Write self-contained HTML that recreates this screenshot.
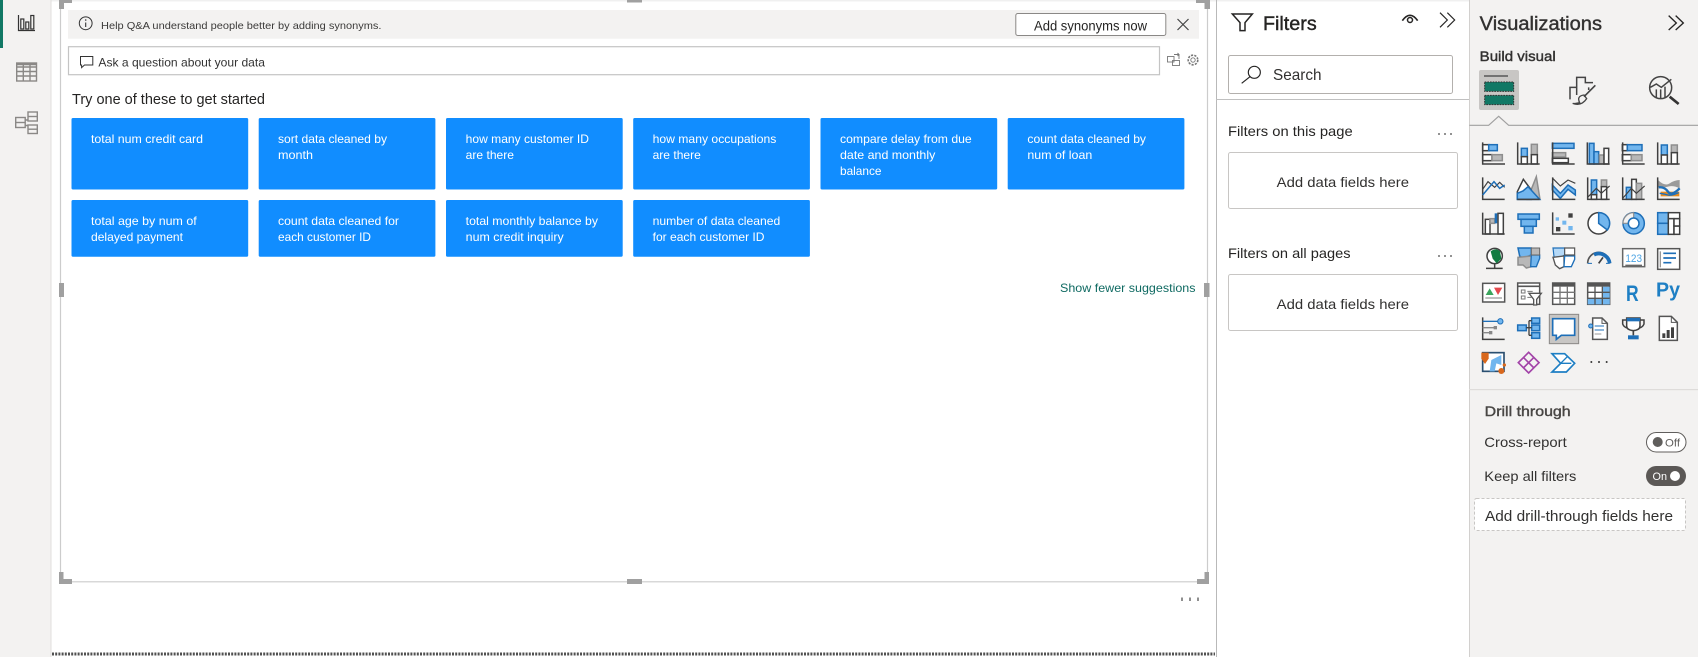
<!DOCTYPE html>
<html lang="en"><head><meta charset="utf-8"><title>Q&amp;A</title>
<style>
html,body{margin:0;padding:0;background:#fff;width:1698px;height:657px;overflow:hidden}
svg{display:block;font-family:"Liberation Sans",sans-serif}
text{fill:#252423}
.c text{fill:#fff;font-size:12px}
.d{fill:none;stroke:#404040;stroke-width:4.5}
.bl{fill:#72b6ee;stroke:#1e6fb8;stroke-width:4.5}
.bb{fill:#1e6fb8;stroke:none}
.gr{fill:#b8b8b8;stroke:#8e8e8e;stroke-width:4.5}
.wh{fill:#fff;stroke:#404040;stroke-width:4.5}
.card{fill:#118dff}
.sb{stroke:#323130;stroke-width:.4}
</style></head><body>
<svg width="1698" height="657" viewBox="0 0 1698 657" xmlns="http://www.w3.org/2000/svg">
<rect width="1698" height="657" fill="#fff"/>
<rect y="0" width="1698" height="1.5" fill="#f0f0f0"/>
<!-- left rail -->
<rect width="51" height="657" fill="#f3f2f1"/>
<rect x="50.5" width="1" height="657" fill="#e1dfdd"/>
<rect width="3" height="48" fill="#117865"/>
<g fill="none" stroke="#333" stroke-width="1.2">
<path d="M18.5 15V30.5H35"/><rect x="20.8" y="19" width="3" height="10"/><rect x="25.8" y="22" width="3" height="7"/><rect x="30.8" y="15.5" width="3" height="13.5"/>
</g>
<g fill="none" stroke="#8a8886" stroke-width="1.4">
<rect x="16.7" y="63" width="19.8" height="18"/><path d="M16.7 67H36.5M16.7 71.5H36.5M16.7 76H36.5M23.3 65V81M30 65V81"/>
<path stroke-width="2.4" d="M16.7 64H36.5"/>
<rect x="15.7" y="117.5" width="9.5" height="10"/><path d="M15.7 122.5H25.2"/>
<rect x="28" y="112" width="9.3" height="9"/><path d="M28 116.5H37.3"/>
<rect x="28" y="125" width="9.3" height="8.5"/><path d="M28 129.2H37.3"/>
<path d="M25.2 120H28M25.2 125.5H28"/>
</g>
<!-- right of canvas panel edge -->
<rect x="1216" width="1" height="657" fill="#b9b9b9"/>
<!-- dotted page edge -->
<path d="M52 654H1215" stroke="#505050" stroke-width="3" stroke-dasharray="2 1.2" fill="none"/>
<!-- frame -->
<g fill="none" stroke="#cccccc" stroke-width="1.2">
<path d="M60.5 0V581.8H1207.5V0"/>
</g>
<g fill="#a0a0a0">
<rect x="59" y="0" width="13" height="3"/><rect x="59" y="0" width="5" height="9"/>
<rect x="627" y="0" width="15" height="2.5"/>
<rect x="1196" y="0" width="14" height="3"/><rect x="1204.5" y="0" width="5.5" height="9"/>
<rect x="59" y="283" width="5" height="14"/><rect x="1204" y="283" width="5.5" height="14"/>
<rect x="59" y="572" width="4.5" height="12"/><rect x="59" y="579" width="13" height="5"/>
<rect x="627" y="579" width="15" height="5"/>
<rect x="1204.5" y="572" width="4.5" height="12"/><rect x="1197" y="579" width="12" height="5"/>
</g>
<g fill="#8f8f8f"><rect x="1181" y="597.5" width="2" height="3.5"/><rect x="1189" y="597.5" width="2" height="3.5"/><rect x="1197" y="597.5" width="2" height="3.5"/></g>
<!-- banner -->
<rect x="68" y="10" width="1131" height="28.7" fill="#f3f2f1"/>
<circle cx="85.7" cy="23.3" r="6.4" fill="none" stroke="#333" stroke-width="1"/>
<path d="M85.7 22.5V27" stroke="#333" stroke-width="1.1"/><circle cx="85.7" cy="20" r=".8" fill="#333"/>
<text x="101" y="29" font-size="10.5" textLength="280.5" lengthAdjust="spacingAndGlyphs" style="fill:#3b3a39">Help Q&amp;A understand people better by adding synonyms.</text>
<rect x="1015.8" y="13.5" width="150" height="22" rx="2" fill="#fff" stroke="#8a8886"/>
<text x="1034" y="30.3" font-size="13.5" textLength="113" lengthAdjust="spacingAndGlyphs">Add synonyms now</text>
<path d="M1177.5 19L1188.5 30M1188.5 19L1177.5 30" stroke="#444" stroke-width="1.2" fill="none"/>
<!-- ask box -->
<rect x="68.5" y="46.7" width="1091" height="28" fill="#fff" stroke="#c4c4c4" stroke-width="1.2"/>
<path d="M80.5 56.5H92.8V65H84.5L81.6 67.6V65H80.5Z" fill="none" stroke="#333" stroke-width="1"/>
<text x="98.4" y="66.3" font-size="12" textLength="166.6" lengthAdjust="spacingAndGlyphs" style="fill:#333">Ask a question about your data</text>
<g fill="none" stroke="#777" stroke-width=".9">
<rect x="1167.5" y="56.5" width="6.5" height="5.5"/><rect x="1172.5" y="60.5" width="7" height="5"/><path d="M1174 54.5H1179V59M1177.5 53L1179 54.5L1177.5 56"/>
<circle cx="1193" cy="60" r="2.2"/><circle cx="1193" cy="60" r="4.8" stroke-dasharray="2.2 1.2" stroke-width="1.6"/>
</g>
<text x="72" y="104" font-size="14.5" textLength="193" lengthAdjust="spacingAndGlyphs">Try one of these to get started</text>
<!-- cards -->
<g class="c">
<rect class="card" x="71.5" y="118" width="176.7" height="71.5" rx="1.5"/>
<rect class="card" x="258.7" y="118" width="176.7" height="71.5" rx="1.5"/>
<rect class="card" x="446" y="118" width="176.7" height="71.5" rx="1.5"/>
<rect class="card" x="633.2" y="118" width="176.7" height="71.5" rx="1.5"/>
<rect class="card" x="820.5" y="118" width="176.7" height="71.5" rx="1.5"/>
<rect class="card" x="1007.7" y="118" width="176.7" height="71.5" rx="1.5"/>
<rect class="card" x="71.5" y="200" width="176.7" height="56.7" rx="1.5"/>
<rect class="card" x="258.7" y="200" width="176.7" height="56.7" rx="1.5"/>
<rect class="card" x="446" y="200" width="176.7" height="56.7" rx="1.5"/>
<rect class="card" x="633.2" y="200" width="176.7" height="56.7" rx="1.5"/>
<text x="91" y="143" textLength="112" lengthAdjust="spacingAndGlyphs">total num credit card</text>
<text x="278" y="143" textLength="109" lengthAdjust="spacingAndGlyphs">sort data cleaned by</text>
<text x="278" y="159" textLength="35" lengthAdjust="spacingAndGlyphs">month</text>
<text x="465.7" y="143" textLength="123.3" lengthAdjust="spacingAndGlyphs">how many customer ID</text>
<text x="465.7" y="159" textLength="48.3" lengthAdjust="spacingAndGlyphs">are there</text>
<text x="652.6" y="143" textLength="123.8" lengthAdjust="spacingAndGlyphs">how many occupations</text>
<text x="652.6" y="159" textLength="48.2" lengthAdjust="spacingAndGlyphs">are there</text>
<text x="840" y="143" textLength="131.7" lengthAdjust="spacingAndGlyphs">compare delay from due</text>
<text x="840" y="159" textLength="95.3" lengthAdjust="spacingAndGlyphs">date and monthly</text>
<text x="840" y="175" textLength="41.5" lengthAdjust="spacingAndGlyphs">balance</text>
<text x="1027.4" y="143" textLength="118.6" lengthAdjust="spacingAndGlyphs">count data cleaned by</text>
<text x="1027.4" y="159" textLength="64.9" lengthAdjust="spacingAndGlyphs">num of loan</text>
<text x="91" y="225" textLength="105.7" lengthAdjust="spacingAndGlyphs">total age by num of</text>
<text x="91" y="241" textLength="92" lengthAdjust="spacingAndGlyphs">delayed payment</text>
<text x="278" y="225" textLength="121" lengthAdjust="spacingAndGlyphs">count data cleaned for</text>
<text x="278" y="241" textLength="93" lengthAdjust="spacingAndGlyphs">each customer ID</text>
<text x="465.7" y="225" textLength="132.3" lengthAdjust="spacingAndGlyphs">total monthly balance by</text>
<text x="465.7" y="241" textLength="98" lengthAdjust="spacingAndGlyphs">num credit inquiry</text>
<text x="652.6" y="225" textLength="127.7" lengthAdjust="spacingAndGlyphs">number of data cleaned</text>
<text x="652.6" y="241" textLength="111.9" lengthAdjust="spacingAndGlyphs">for each customer ID</text>
</g>
<text x="1060" y="292" font-size="12" textLength="135.5" lengthAdjust="spacingAndGlyphs" style="fill:#0f6a62">Show fewer suggestions</text>
<!-- filters pane -->
<text x="1263" y="30" font-size="19" class="sb" textLength="53.7" lengthAdjust="spacingAndGlyphs" style="stroke:#252423">Filters</text>
<rect x="1228.5" y="55.5" width="224" height="38" rx="2" fill="#fff" stroke="#b3b0ad"/>
<g transform="translate(1210 0) scale(.33333)" fill="none" stroke="#252423">
<path d="M67 42H127L105 68V92H90V68Z" stroke-width="4.5"/>
<path d="M577 62Q600 30 623 62" stroke-width="5"/><circle cx="600" cy="60" r="7.5" stroke-width="4.5"/>
<path d="M690 38L712 60L690 82M712 38L734 60L712 82" stroke-width="3.5"/>
<circle cx="133" cy="217" r="18" stroke-width="3.5"/><path d="M120 230L95 250" stroke-width="3.5"/>
</g>
<text x="1273" y="80" font-size="16" textLength="48.5" lengthAdjust="spacingAndGlyphs" style="fill:#323130">Search</text>
<rect x="1216" y="99" width="253" height="1" fill="#c0c0c0"/>
<text x="1228" y="136" font-size="14" textLength="124.7" lengthAdjust="spacingAndGlyphs">Filters on this page</text>
<text x="1228" y="258" font-size="14" textLength="122.5" lengthAdjust="spacingAndGlyphs">Filters on all pages</text>
<g fill="#444"><circle cx="1439" cy="134" r=".9"/><circle cx="1445" cy="134" r=".9"/><circle cx="1451" cy="134" r=".9"/><circle cx="1439" cy="256" r=".9"/><circle cx="1445" cy="256" r=".9"/><circle cx="1451" cy="256" r=".9"/></g>
<rect x="1228.5" y="152.5" width="229" height="56" rx="2" fill="#fff" stroke="#c8c6c4"/>
<rect x="1228.5" y="274.5" width="229" height="56" rx="2" fill="#fff" stroke="#c8c6c4"/>
<text x="1276.7" y="187" font-size="14" textLength="132.3" lengthAdjust="spacingAndGlyphs" style="fill:#323130">Add data fields here</text>
<text x="1276.7" y="309" font-size="14" textLength="132.3" lengthAdjust="spacingAndGlyphs" style="fill:#323130">Add data fields here</text>
<!-- viz pane -->
<rect x="1469" y="0" width="229" height="657" fill="#f3f2f1"/>
<rect x="1469" y="0" width="1" height="657" fill="#d2d0ce"/>
<text x="1479.7" y="30" font-size="19" class="sb" textLength="122.3" lengthAdjust="spacingAndGlyphs" style="fill:#323130">Visualizations</text>
<text x="1479.7" y="61" font-size="14" class="sb" textLength="76" lengthAdjust="spacingAndGlyphs" style="fill:#323130">Build visual</text>
<g transform="translate(1468 0) scale(.33333)">
<path d="M602 47L625 69L602 90M623 47L646 69L623 90" fill="none" stroke="#252423" stroke-width="4"/>
<rect x="33" y="210" width="120" height="120" rx="6" fill="#c8c6c4"/>
<path d="M48 228H120" stroke="#404040" stroke-width="4"/>
<rect x="50" y="246" width="87" height="28" fill="#117865" stroke="#333" stroke-width="3" stroke-dasharray="5 3"/>
<rect x="50" y="286" width="87" height="28" fill="#117865" stroke="#333" stroke-width="3" stroke-dasharray="5 3"/>
<g fill="none" stroke="#444" stroke-width="4.5">
<path d="M306 298V262H326V232H352V250M352 248H375M362 270V262M326 262V285"/>
<path d="M382 256L348 290" stroke-width="5"/><path d="M348 285Q325 288 335 308Q318 312 314 310Q340 320 356 296Z" stroke-width="4"/>
<circle cx="578" cy="263" r="33"/><path d="M547 262L565 252L580 262L610 238"/><path d="M565 268V294M578 268V296M591 260V294"/>
</g>
<path d="M605 290L632 312" stroke="#333" stroke-width="8"/>
<path d="M4 376H62L92 349L122 376H690" fill="none" stroke="#a0a0a0" stroke-width="3.5"/>
</g>
<!-- icon rows 1-3 -->
<g transform="translate(1468 130) scale(.33333)">
<!-- 1 -->
<rect class="wh" x="44" y="44" width="20" height="18"/><rect class="bl" x="62" y="44" width="26" height="18"/><rect class="wh" x="44" y="74" width="28" height="18"/><rect class="gr" x="72" y="74" width="31" height="18"/><path class="d" d="M44 37V102H111"/>
<!-- 2 -->
<rect class="bl" x="160" y="55" width="18" height="25"/><rect class="wh" x="160" y="80" width="18" height="22"/><rect class="gr" x="190" y="43" width="18" height="31"/><rect class="wh" x="190" y="74" width="18" height="28"/><path class="d" d="M149 37V102H215"/>
<!-- 3 -->
<rect class="bl" x="253" y="40" width="65" height="15"/><rect class="gr" x="253" y="68" width="40" height="13"/><rect class="wh" x="253" y="85" width="48" height="13"/><path class="d" d="M254 37V102H320"/>
<!-- 4 -->
<rect class="bl" x="364" y="40" width="14" height="62"/><rect class="bl" x="378" y="65" width="14" height="37"/><rect class="gr" x="394" y="75" width="14" height="27"/><rect class="wh" x="408" y="55" width="14" height="47"/><path class="d" d="M358 37V102H425"/>
<!-- 5 -->
<rect class="wh" x="463" y="44" width="15" height="18"/><rect class="bl" x="478" y="44" width="44" height="18"/><rect class="wh" x="463" y="74" width="27" height="18"/><rect class="gr" x="490" y="74" width="32" height="18"/><path class="d" d="M464 37V102H530"/>
<!-- 6 -->
<rect class="bl" x="580" y="45" width="18" height="30"/><rect class="wh" x="580" y="75" width="18" height="27"/><rect class="gr" x="610" y="45" width="18" height="23"/><rect class="wh" x="610" y="68" width="18" height="34"/><path class="d" d="M569 37V102H635"/>
<!-- 7 -->
<path class="d" d="M44 142V208H110"/><path class="d" d="M44 178L60 155L80 172L95 157L110 172" style="stroke-width:3.5"/><path d="M44 195L78 155L95 175L110 165" fill="none" stroke="#1e6fb8" stroke-width="4.5"/>
<!-- 8 -->
<path class="gr" d="M178 208L205 140L216 208Z"/><path class="wh" d="M148 208V185L166 148L190 180V208Z"/><path class="bl" d="M148 208V190L165 183L180 170L215 208Z"/><path class="d" d="M148 208H215"/>
<!-- 9 -->
<path class="bl" d="M253 165L277 190L300 165L322 180V195L300 178L277 205L253 180Z"/><path class="d" d="M254 142V208H322"/><path class="d" d="M254 145L277 168L300 150L322 160" style="stroke-width:3.5"/>
<!-- 10 -->
<rect class="bl" x="370" y="150" width="16" height="44"/><rect class="wh" x="370" y="194" width="16" height="14"/><rect class="gr" x="400" y="150" width="16" height="20"/><rect class="wh" x="400" y="170" width="16" height="38"/><path class="d" d="M359 142V208H425"/><path class="d" d="M359 202L385 175L400 190L425 168" style="stroke-width:3.5"/>
<!-- 11 -->
<rect class="bl" x="475" y="172" width="16" height="36"/><rect class="wh" x="491" y="148" width="14" height="60"/><rect class="gr" x="505" y="160" width="16" height="48"/><path class="d" d="M464 142V208H530"/><path class="d" d="M464 205L490 175L505 190L530 168" style="stroke-width:3.5"/>
<!-- 12 -->
<path fill="#9a9a9a" d="M570 150Q590 170 605 160T635 150V175Q615 165 600 170T570 170Z"/><rect x="578" y="185" width="56" height="14" fill="#e68a1f"/><path d="M572 172Q590 170 600 185T635 175" fill="none" stroke="#1e6fb8" stroke-width="7"/><path d="M575 190Q590 192 600 195T632 188" fill="none" stroke="#1e6fb8" stroke-width="4"/><path class="d" d="M569 142V208H635"/>
<!-- 13 -->
<rect class="wh" x="52" y="268" width="14" height="44"/><rect class="gr" x="66" y="266" width="14" height="14"/><rect class="bb" x="80" y="250" width="8" height="30"/><rect class="wh" x="90" y="250" width="16" height="62"/><path class="d" d="M44 248V312H110"/>
<!-- 14 -->
<rect class="bl" x="150" y="252" width="64" height="16"/><rect class="bl" x="159" y="268" width="46" height="21"/><rect class="bl" x="169" y="289" width="26" height="20"/>
<!-- 15 -->
<path class="d" d="M254 247V312H320"/><rect x="263" y="262" width="10" height="10" fill="#72b6ee"/><rect x="283" y="272" width="12" height="12" fill="#72b6ee"/><rect x="301" y="250" width="13" height="13" fill="#404040"/><rect x="264" y="291" width="13" height="13" fill="#404040"/><rect x="301" y="288" width="13" height="13" fill="#72b6ee"/>
<!-- 16 -->
<circle class="wh" cx="392" cy="280" r="32"/><path class="bl" d="M392 280V248A32 32 0 0 1 418 300Z"/>
<!-- 17 -->
<circle cx="497" cy="280" r="32" fill="#72b6ee" stroke="#1e6fb8" stroke-width="4.5"/><path d="M497 248A32 32 0 0 0 465 280H481A16 16 0 0 1 497 264Z" fill="#f3f2f1" stroke="#8e8e8e" stroke-width="3.5"/><circle cx="497" cy="280" r="16" fill="#fff" stroke="#1e6fb8" stroke-width="4.5"/>
<!-- 18 -->
<rect class="bl" x="569" y="248" width="32" height="32"/><rect class="bl" x="569" y="280" width="32" height="33"/><rect class="wh" x="601" y="248" width="34" height="18"/><rect class="wh" x="601" y="266" width="17" height="47"/><rect class="wh" x="618" y="288" width="17" height="25"/><rect class="wh" x="618" y="266" width="17" height="22"/>
</g>
<!-- icon rows 4-7 -->
<g transform="translate(1468 250) scale(.33333)">
<!-- 19 globe -->
<circle cx="80" cy="18" r="23" fill="#fff" stroke="#404040" stroke-width="4.5"/><path d="M68 4Q84 -8 96 4L100 26L86 40L74 26Z" fill="#107c41"/><path d="M54 55H104M80 42V55" stroke="#404040" stroke-width="4.5" fill="none"/>
<!-- 20 filled map -->
<path class="bl" d="M150 -6H190V15L165 25L155 18Z"/><path class="gr" d="M150 22L190 18V50L175 54L165 45L150 45Z"/><path d="M190 15H215V25L205 50H188Z" fill="#72b6ee" stroke="#1e6fb8" stroke-width="4"/><path d="M190 -6H215V15H190Z" fill="#b8b8b8" stroke="#666" stroke-width="3"/>
<!-- 21 shape map -->
<path d="M255 -6H290V15L270 25L258 20Z" fill="#b5d9f7" stroke="#1e6fb8" stroke-width="3.5"/><path d="M255 22L288 18V50L275 56L262 45Z" fill="#fff" stroke="#555" stroke-width="4"/><path d="M290 18H320V28L310 50H288Z" fill="#fff" stroke="#1e6fb8" stroke-width="4"/><path d="M290 -6H320V15H290Z" fill="#fff" stroke="#555" stroke-width="3.5"/>
<!-- 22 gauge -->
<path d="M359 40A33 33 0 0 1 425 40" fill="none" stroke="#555" stroke-width="5"/><path d="M378 14A33 33 0 0 1 425 40" fill="none" stroke="#1e6fb8" stroke-width="11"/><path d="M392 40L405 22" stroke="#404040" stroke-width="5"/><path d="M359 40H372M414 40H425" stroke="#1e6fb8" stroke-width="3"/>
<!-- 23 card -->
<rect class="wh" x="464" y="-4" width="66" height="54" style="stroke:#666"/><text x="472" y="36" font-size="33" style="fill:#4ba3e3" textLength="50" lengthAdjust="spacingAndGlyphs">123</text><path d="M472 46H522" stroke="#666" stroke-width="4"/>
<!-- 24 multi-row -->
<rect class="wh" x="569" y="-4" width="66" height="62" style="stroke:#555"/><path d="M586 10H624M586 24H624M586 38H610" stroke="#1e6fb8" stroke-width="5"/><path d="M577 4V52" stroke="#999" stroke-width="4"/>
<!-- 25 KPI -->
<rect class="wh" x="44" y="100" width="66" height="56" style="stroke:#555"/><path d="M53 135L65 115L77 135Z" fill="#3ba55d"/><path d="M78 113H103L90 135Z" fill="#e5484d"/><path d="M52 144H102" stroke="#999" stroke-width="4"/>
<!-- 26 slicer -->
<rect class="wh" x="149" y="99" width="66" height="64" style="stroke:#555"/><path d="M149 109H215" stroke="#555" stroke-width="5"/><rect x="160" y="120" width="11" height="9" fill="#fff" stroke="#777" stroke-width="3"/><rect x="160" y="138" width="11" height="9" fill="#fff" stroke="#777" stroke-width="3"/><path d="M178 124H194M178 142H190" stroke="#777" stroke-width="3"/><path d="M183 130H220L206 148V165H197V148Z" fill="#fff" stroke="#555" stroke-width="4"/>
<!-- 27 table -->
<rect class="wh" x="254" y="99" width="66" height="64" style="stroke:#555"/><rect x="254" y="99" width="66" height="11" fill="#555"/><path d="M276 110V163M298 110V163M254 127H320M254 145H320" stroke="#777" stroke-width="4"/>
<!-- 28 matrix -->
<rect class="wh" x="359" y="99" width="66" height="64" style="stroke:#555"/><rect x="403" y="110" width="22" height="53" fill="#72b6ee"/><rect x="359" y="145" width="66" height="18" fill="#72b6ee"/><rect x="359" y="99" width="66" height="11" fill="#555"/><path d="M381 110V163M403 110V163M359 127H425M359 145H425" stroke="#555" stroke-width="4"/>
<!-- 29/30 text -->
<text x="474" y="153" font-size="66" font-weight="700" style="fill:#1e7fc4" textLength="38" lengthAdjust="spacingAndGlyphs">R</text>
<text x="564" y="139" font-size="60" font-weight="700" style="fill:#1e7fc4" textLength="72" lengthAdjust="spacingAndGlyphs">Py</text>
<!-- 31 -->
<path class="d" d="M44 202V268H110"/><path d="M44 214H90" stroke="#1e6fb8" stroke-width="4"/><circle cx="97" cy="214" r="8" fill="#72b6ee" stroke="#1e6fb8" stroke-width="3"/><path d="M44 233H78M44 248H64" stroke="#888" stroke-width="4"/><rect x="77" y="228" width="10" height="10" fill="#888"/><rect x="63" y="243" width="10" height="10" fill="#888"/>
<!-- 32 -->
<rect class="bl" x="149" y="225" width="26" height="17"/><rect class="bl" x="191" y="204" width="24" height="16"/><rect class="bl" x="191" y="225" width="24" height="17"/><rect class="bl" x="191" y="248" width="24" height="17"/><path d="M175 233H191M183 212V256M183 212H191M183 256H191" stroke="#404040" stroke-width="4" fill="none"/>
<!-- 33 QnA -->
<rect x="244" y="193" width="88" height="88" fill="#c8c6c4" stroke="#8a8886" stroke-width="3"/><path d="M254 206H320V256H280L265 268V256H254Z" fill="#fff" stroke="#1e6fb8" stroke-width="5"/>
<!-- 34 narrative -->
<path class="wh" d="M374 204H402L418 220V268H374Z" style="stroke:#555"/><path d="M402 204V220H418" fill="none" stroke="#555" stroke-width="3"/><circle cx="368" cy="228" r="6" fill="#72b6ee" stroke="#1e6fb8" stroke-width="3"/><path d="M380 228H408M380 240H408" stroke="#1e6fb8" stroke-width="3"/><path d="M380 252H400" stroke="#999" stroke-width="3"/>
<!-- 35 trophy -->
<path d="M476 204H516V228Q516 240 496 242Q476 240 476 228Z" fill="#fff" stroke="#404040" stroke-width="4.5"/><path d="M476 204H516V214H476Z" fill="#1e6fb8"/><path d="M476 210H464V222Q468 232 478 234M516 210H528V222Q524 232 514 234" fill="none" stroke="#404040" stroke-width="4.5"/><path d="M496 242V256" stroke="#404040" stroke-width="5"/><rect x="480" y="256" width="32" height="12" fill="#1e6fb8"/>
<!-- 36 paginated -->
<path class="wh" d="M574 199H610L628 217V271H574Z" style="stroke:#555"/><path d="M610 199V217H628" fill="none" stroke="#555" stroke-width="3"/><rect x="583" y="250" width="9" height="14" fill="#404040"/><rect x="596" y="240" width="9" height="24" fill="#404040"/><rect x="609" y="232" width="9" height="32" fill="#404040"/>
<!-- 37 -->
<rect x="44" y="308" width="64" height="56" fill="#fff" stroke="#2a4f70" stroke-width="5"/><path d="M70 330L100 315V345L85 340L80 364H65Z" fill="#72b6ee"/><path d="M40 308H62V326L51 342L40 326Z" fill="#d9681d"/><circle cx="100" cy="363" r="9" fill="#d9681d"/><circle cx="109" cy="345" r="5" fill="#d9681d"/>
<!-- 38 power apps -->
<path d="M182 307L213 338L182 369L151 338Z" fill="none" stroke="#a243a8" stroke-width="5"/><path d="M166 322L198 354M198 322L166 354" fill="none" stroke="#a243a8" stroke-width="5"/>
<!-- 39 power automate -->
<path d="M252 311H290L320 340L295 366H252L278 340Z" fill="#fff" stroke="#1e7fc4" stroke-width="5"/><path d="M278 340L300 318M278 340H310" fill="none" stroke="#1e7fc4" stroke-width="4"/>
<!-- 40 dots -->
<g fill="#333"><circle cx="370" cy="336" r="3"/><circle cx="393" cy="336" r="3"/><circle cx="416" cy="336" r="3"/></g>
</g>
<!-- drill through -->
<rect x="1469" y="389" width="229" height="1.2" fill="#dedcda"/>
<text x="1484.7" y="416" font-size="14" class="sb" textLength="86" lengthAdjust="spacingAndGlyphs" style="fill:#484644;stroke:#484644">Drill through</text>
<text x="1484.3" y="447" font-size="14" textLength="82.4" lengthAdjust="spacingAndGlyphs" style="fill:#323130">Cross-report</text>
<text x="1484.3" y="481" font-size="14" textLength="92" lengthAdjust="spacingAndGlyphs" style="fill:#323130">Keep all filters</text>
<rect x="1646.5" y="432.5" width="39.5" height="19.5" rx="9.7" fill="#fff" stroke="#605e5c"/>
<circle cx="1657.7" cy="442" r="5" fill="#605e5c"/>
<text x="1665" y="446.5" font-size="11" textLength="15" lengthAdjust="spacingAndGlyphs" style="fill:#605e5c">Off</text>
<rect x="1646" y="466" width="40" height="20" rx="10" fill="#5b5856"/>
<text x="1652.5" y="480" font-size="11" textLength="14.5" lengthAdjust="spacingAndGlyphs" style="fill:#fff">On</text>
<circle cx="1675" cy="476" r="5" fill="#fff"/>
<rect x="1474.5" y="498.5" width="211" height="32" rx="2" fill="#fff" stroke="#c8c6c4" stroke-dasharray="3 2"/>
<text x="1485" y="521" font-size="14.5" textLength="188" lengthAdjust="spacingAndGlyphs" style="fill:#323130">Add drill-through fields here</text>
</svg>
</body></html>
